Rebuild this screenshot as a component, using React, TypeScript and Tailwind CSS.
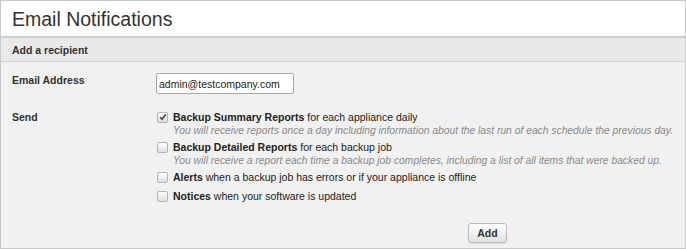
import { useState } from "react";

function Box({ checked, onToggle }: { checked: boolean; onToggle: () => void }) {
  return (
    <button
      type="button"
      onClick={onToggle}
      className="ml-[1px] flex h-[11px] w-[11px] shrink-0 items-center justify-center rounded-[2px] border border-[#b4b4b4] bg-gradient-to-b from-white to-[#dedede]"
    >
      {checked && (
        <svg width="8" height="8" viewBox="0 0 8 8">
          <path d="M1.2 4.2 L3 6.2 L6.8 1.4" fill="none" stroke="#444" strokeWidth="1.6" />
        </svg>
      )}
    </button>
  );
}

const options = [
  {
    title: "Backup Summary Reports",
    rest: "for each appliance daily",
    desc: "You will receive reports once a day including information about the last run of each schedule the previous day.",
    gap: "",
  },
  {
    title: "Backup Detailed Reports",
    rest: "for each backup job",
    desc: "You will receive a report each time a backup job completes, including a list of all items that were backed up.",
    gap: "mt-[2px]",
  },
  { title: "Alerts", rest: "when a backup job has errors or if your appliance is offline", gap: "mt-[2px]" },
  { title: "Notices", rest: "when your software is updated", gap: "mt-[5px]" },
];

export default function App() {
  const [checked, setChecked] = useState([true, false, false, false]);
  const [email, setEmail] = useState("admin@testcompany.com");

  return (
    <div className="h-[250px] w-[686px] bg-white font-['Liberation_Sans',Arial,sans-serif]">
      <div className="flex h-[249px] flex-col border border-[#c9c9c9]">
        {/* header */}
        <div className="h-[37px] shrink-0 border-b-2 border-[#cdcdcd] bg-white pl-[11px] pt-[6px] text-[19.5px] leading-[24px] text-[#333]">
          Email Notifications
        </div>

        {/* sub header */}
        <div className="h-[24px] shrink-0 border-b border-[#d6d6d6] bg-[#e9e9ea] pl-[11px] pt-[6px] text-[10.5px] font-bold leading-[13px] text-[#333]">
          Add a recipient
        </div>

        {/* body */}
        <div className="flex flex-1 flex-col bg-[#f1f1f1] pl-[11px] text-[10.5px] leading-[14px] text-[#222]">
          <div className="mt-[11px] flex">
            <div className="w-[144px] font-bold text-[#333]">Email Address</div>
            <input
              value={email}
              onChange={(e) => setEmail(e.target.value)}
              className="h-[21px] w-[138px] rounded-[2px] border border-[#a9a9a9] bg-white px-[2px] text-[10.5px] text-[#222] outline-none"
            />
          </div>

          <div className="mt-[16px] flex">
            <div className="w-[144px] font-bold text-[#333]">Send</div>
            <div className="flex flex-col">
              {options.map((o, i) => (
                <div key={o.title} className={o.gap}>
                  <div className="flex items-center gap-[5px]">
                    <Box
                      checked={checked[i]}
                      onToggle={() => setChecked(checked.map((c, j) => (j === i ? !c : c)))}
                    />
                    <div className="whitespace-nowrap">
                      <span className="font-bold">{o.title}</span> {o.rest}
                    </div>
                  </div>
                  {o.desc && (
                    <div className="whitespace-nowrap pl-[17px] text-[10.3px] italic text-[#8a8a8a]">{o.desc}</div>
                  )}
                </div>
              ))}
            </div>
          </div>

          <div className="mt-[20px] flex pl-[456px]">
            <button
              type="button"
              className="h-[20px] w-[39px] rounded-[3px] border border-[#bdbdbd] bg-gradient-to-b from-white to-[#e2e2e2] text-[10.5px] font-bold text-[#333] shadow-[0_1px_1px_rgba(0,0,0,0.08)]"
            >
              Add
            </button>
          </div>
        </div>
      </div>
    </div>
  );
}
